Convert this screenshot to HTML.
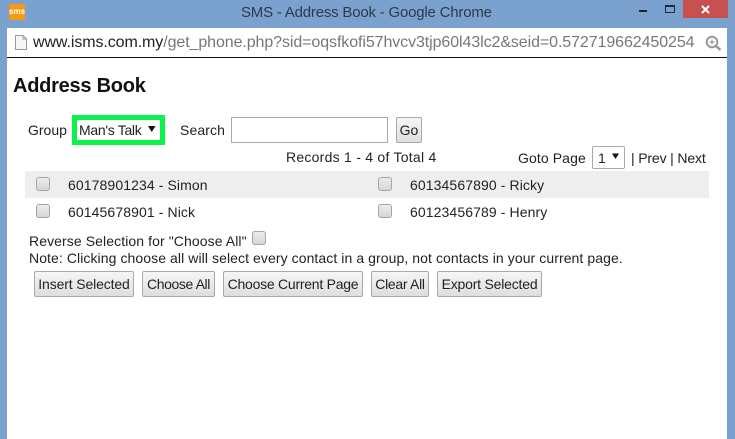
<!DOCTYPE html>
<html><head><meta charset="utf-8"><style>
html,body{margin:0;padding:0}
body{width:735px;height:439px;position:relative;overflow:hidden;background:#7ba1cf;font-family:"Liberation Sans",sans-serif;font-size:14px;color:#222}
.a{position:absolute;white-space:nowrap;line-height:16px}
.cb{position:absolute;width:12px;height:12px;border:1px solid #a4a4a4;border-radius:3px;background:linear-gradient(#ededed,#d6d6d6)}
.b{position:absolute;top:271px;height:24px;border:1px solid #a9a9a9;border-radius:2px;background:linear-gradient(#f6f6f6,#dedede);text-align:center;line-height:24px;font-size:14px;color:#222;white-space:nowrap}
</style></head><body>
<div class="a" style="left:9px;top:4px;width:16px;height:16px;background:#f79a13;border-radius:1px;color:#fff;font-size:8px;font-weight:bold;line-height:16px;text-align:center">sms</div>
<div class="a" style="left:241px;top:4px;font-size:15px;line-height:18px;color:#2c3a4a;letter-spacing:-.2px">SMS - Address Book - Google Chrome</div>
<div class="a" style="left:639px;top:10px;width:8px;height:2px;background:#222"></div>
<div class="a" style="left:665px;top:5px;width:8px;height:5px;border:1px solid #1c2a3a;border-top-width:2px"></div>
<div class="a" style="left:683px;top:0;width:45px;height:18px;background:#c75050"></div>
<svg class="a" style="left:700px;top:4px" width="11" height="11" viewBox="0 0 11 11"><path d="M2 2L9 9M9 2L2 9" stroke="#fff" stroke-width="2"/></svg>
<div class="a" style="left:7px;top:28px;width:720px;height:29px;background:#fff;border-bottom:1px solid #111"></div>
<svg class="a" style="left:15px;top:35px" width="12" height="15" viewBox="0 0 12 15"><path d="M.5.5H8L11.5 4V14.500H.5Z" fill="#f6f6f6" stroke="#9a9a9a"/><path d="M8 .5V4H11.500" fill="none" stroke="#9a9a9a"/></svg>
<div class="a" style="left:33px;top:33px;font-size:16px;line-height:20px;color:#222;letter-spacing:-.09px">www.isms.com.my<span style="color:#777">/get_phone.php?sid=oqsfkofi57hvcv3tjp60l43lc2&amp;seid=0.572719662450254</span></div>
<svg class="a" style="left:705px;top:35px" width="17" height="16" viewBox="0 0 17 16"><circle cx="7" cy="7" r="5.300" fill="none" stroke="#999" stroke-width="2"/><path d="M11 11L15.500 15" stroke="#999" stroke-width="2.500"/><path d="M4.500 7H9.500M7 4.500V9.500" stroke="#999" stroke-width="1.200"/></svg>
<div class="a" style="left:7px;top:58px;width:720px;height:381px;background:#fff"></div>
<div class="a" style="left:13px;top:75px;font-size:20px;line-height:23px;font-weight:bold;color:#111;letter-spacing:-.25px">Address Book</div>
<div class="a" style="left:28px;top:122px">Group</div>
<div class="a" style="left:72px;top:115px;width:83px;height:20px;border:5px solid #0cf24c;background:#fff"></div>
<div class="a" style="left:79px;top:122px;color:#222;letter-spacing:-.3px">Man's Talk</div>
<svg class="a" style="left:148px;top:125px" width="8" height="8" viewBox="0 0 8 8"><path d="M0 1H7.500L3.750 7Z" fill="#111"/></svg>
<div class="a" style="left:180px;top:122px;letter-spacing:.1px">Search</div>
<div class="a" style="left:231px;top:117px;width:155px;height:24px;border:1px solid #a9a9a9;background:#fff"></div>
<div class="b" style="left:396px;top:117px;width:24px">Go</div>
<div class="a" style="left:286px;top:149px;letter-spacing:.25px">Records 1 - 4 of Total 4</div>
<div class="a" style="left:518px;top:150px;letter-spacing:.1px">Goto Page</div>
<div class="a" style="left:592px;top:146px;width:31px;height:21px;border:1px solid #a9a9a9;border-radius:2px;background:#fff"></div>
<div class="a" style="left:598px;top:150px">1</div>
<svg class="a" style="left:612px;top:153px" width="8" height="7" viewBox="0 0 8 7"><path d="M0 .5H7L3.500 6Z" fill="#111"/></svg>
<div class="a" style="left:631px;top:150px;letter-spacing:-.15px">| Prev | Next</div>
<div class="a" style="left:25px;top:171px;width:684px;height:27px;background:#eee"></div>
<div class="cb" style="left:36px;top:177px"></div>
<div class="a" style="left:68px;top:177px;letter-spacing:.1px">60178901234 - Simon</div>
<div class="cb" style="left:378px;top:177px"></div>
<div class="a" style="left:410px;top:177px;letter-spacing:.1px">60134567890 - Ricky</div>
<div class="cb" style="left:36px;top:204px"></div>
<div class="a" style="left:68px;top:204px;letter-spacing:.1px">60145678901 - Nick</div>
<div class="cb" style="left:378px;top:204px"></div>
<div class="a" style="left:410px;top:204px;letter-spacing:.1px">60123456789 - Henry</div>
<div class="a" style="left:29px;top:233px;letter-spacing:.09px">Reverse Selection for "Choose All"</div>
<div class="cb" style="left:252px;top:231px"></div>
<div class="a" style="left:29px;top:250px;letter-spacing:.08px">Note: Clicking choose all will select every contact in a group, not contacts in your current page.</div>
<div class="b" style="left:34px;width:98px;letter-spacing:-.13px">Insert Selected</div>
<div class="b" style="left:142px;width:71px;letter-spacing:-.4px">Choose All</div>
<div class="b" style="left:223px;width:138px;letter-spacing:-.25px">Choose Current Page</div>
<div class="b" style="left:371px;width:56px;letter-spacing:-.3px">Clear All</div>
<div class="b" style="left:437px;width:103px;letter-spacing:-.2px">Export Selected</div>
</body></html>
